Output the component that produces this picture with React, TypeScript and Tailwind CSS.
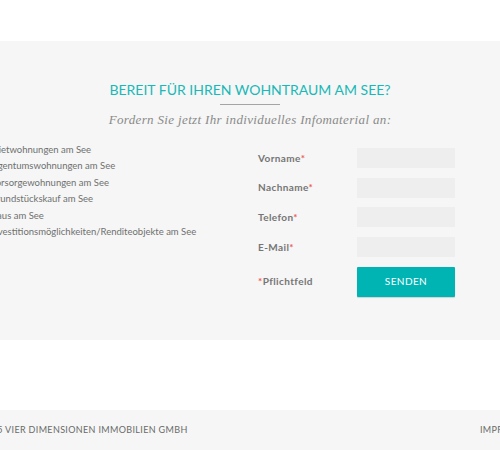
const items = [
  "Mietwohnungen am See",
  "Eigentumswohnungen am See",
  "Vorsorgewohnungen am See",
  "Grundstückskauf am See",
  "Haus am See",
  "Investitionsmöglichkeiten/Renditeobjekte am See",
];

const fields = ["Vorname", "Nachname", "Telefon", "E-Mail"];

const App = () => {
  return (
    <div className="w-[500px] h-[450px] overflow-hidden bg-white font-['Lato',sans-serif]">
      <div className="h-[41px]" />

      {/* Anfrage section */}
      <section className="h-[299px] bg-[#f5f6f5] pt-[40px]">
        <h2 className="text-center text-[14px] leading-[18px] text-[#1ab8b8]">
          BEREIT FÜR IHREN WOHNTRAUM AM SEE?
        </h2>
        <div className="mx-auto mt-[5px] h-px w-[60px] bg-[#a5a5a5]" />
        <p className="mt-[6px] text-center font-['Liberation_Serif',serif] italic text-[13px] leading-[17px] tracking-[0.35px] text-[#8a8a8a]">
          Fordern Sie jetzt Ihr individuelles Infomaterial an:
        </p>

        <div className="mt-[12px] flex">
          <ul className="ml-[-10px] w-[268px] pt-[2px] text-[9.5px] leading-[16.4px] text-[#707070]">
            {items.map((item) => (
              <li key={item} className="whitespace-nowrap">{item}</li>
            ))}
          </ul>

          <form className="mt-[8px] flex flex-col gap-[9.7px]">
            {fields.map((f) => (
              <div key={f} className="flex items-center">
                <label className="w-[99px] text-[10px] font-bold tracking-[0.4px] text-[#757575]">
                  {f}<span className="text-[#f05a5a]">*</span>
                </label>
                <input className="h-[20px] w-[98px] bg-[#eeeeee] outline-none" />
              </div>
            ))}
            <div className="flex items-center">
              <span className="w-[99px] text-[10px] font-bold tracking-[0.4px] text-[#757575]">
                <span className="text-[#f05a5a]">*</span>Pflichtfeld
              </span>
              <button
                type="button"
                className="h-[30px] w-[98px] rounded-[1px] bg-[#00b4b4] text-[10px] tracking-[0.4px] text-white shadow-[0_1px_1px_rgba(0,0,0,0.15)]"
              >
                SENDEN
              </button>
            </div>
          </form>
        </div>
      </section>

      <div className="h-[70px]" />

      <footer className="flex h-[40px] items-center justify-between bg-[#f5f6f5] text-[9px] tracking-[0.35px] text-[#6a6a6a]">
        <span className="ml-[-30px] whitespace-nowrap">© 2015 VIER DIMENSIONEN IMMOBILIEN GMBH</span>
        <span className="mr-[-35px] whitespace-nowrap">IMPRESSUM</span>
      </footer>
    </div>
  );
};

export default App;
